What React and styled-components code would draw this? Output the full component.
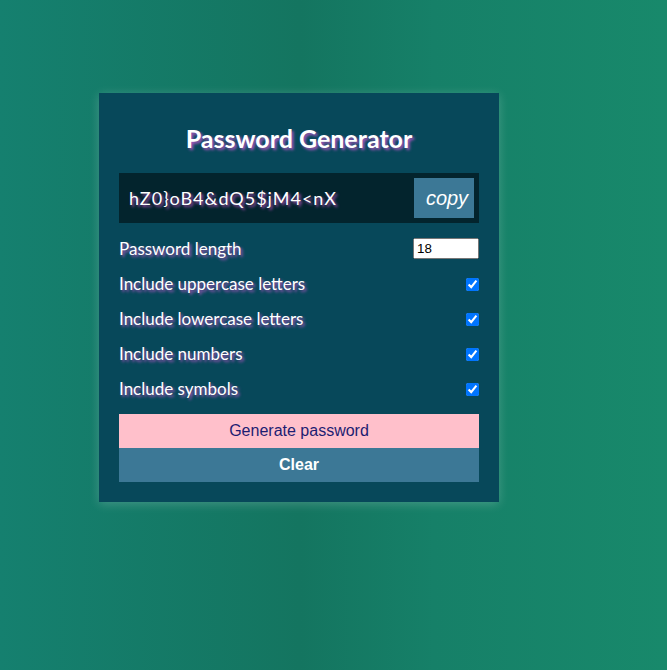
import React, { useState } from "react";
import styled, { createGlobalStyle } from "styled-components";

const GlobalStyle = createGlobalStyle`
  * {
    box-sizing: border-box;
  }
  body {
    margin: 0;
    min-height: 100vh;
    background: linear-gradient(to right, #15806f 0%, #147560 45%, #168068 65%, #18896b 100%);
    color: #fff;
    font-family: Lato, "Open Sans", sans-serif;
  }
`;

const Page = styled.div`
  min-height: 670px;
  padding: 93px 0 0 99px;
`;

const Card = styled.div`
  width: 400px;
  padding: 20px;
  background-color: #07485a;
  box-shadow: 0 2px 10px rgba(255, 255, 255, 0.2);
`;

const Title = styled.h2`
  margin: 10px 0 20px;
  text-align: center;
  font-size: 25px;
  font-weight: 700;
  line-height: 30px;
  text-shadow: 2px 2px 3px rgba(220, 90, 220, 0.75);
`;

const Result = styled.div`
  position: relative;
  display: flex;
  align-items: center;
  height: 50px;
  padding: 12px 10px;
  background-color: rgba(0, 0, 0, 0.5);
  font-size: 18px;
  letter-spacing: 1px;
  text-shadow: 2px 2px 3px rgba(220, 90, 220, 0.75);
`;

const Btn = styled.button`
  display: ${(p) => (p.$block ? "block" : "inline-block")};
  width: ${(p) => (p.$block ? "100%" : "auto")};
  border: none;
  background-color: ${(p) => p.$bg || "#3c7896"};
  color: ${(p) => p.$color || "#fff"};
  font-family: "Liberation Sans", Arial, sans-serif;
  font-size: 16px;
  font-weight: ${(p) => (p.$bold ? 700 : 400)};
  padding: 8px 12px;
  cursor: pointer;
`;

const CopyBtn = styled(Btn)`
  position: absolute;
  top: 5px;
  right: 5px;
  width: 60px;
  height: 40px;
  padding: 0 0 0 6px;
  font-size: 20px;
  font-style: italic;
`;

const Setting = styled.div`
  display: flex;
  justify-content: space-between;
  align-items: center;
  margin: 15px 0;
  font-size: 17px;
  line-height: 20px;
  text-shadow: 2px 2px 3px rgba(220, 90, 220, 0.75);
`;

const NumberInput = styled.input`
  width: 66px;
  height: 21px;
  margin: 0;
  font-family: "Liberation Sans", Arial, sans-serif;
  font-size: 13.33px;
`;

const Check = styled.input`
  margin: 3px 0 3px 4px;
  width: 13px;
  height: 13px;
`;

const options = [
  { key: "upper", label: "Include uppercase letters" },
  { key: "lower", label: "Include lowercase letters" },
  { key: "numbers", label: "Include numbers" },
  { key: "symbols", label: "Include symbols" },
];

export default function App() {
  const [length, setLength] = useState(18);
  const [checked, setChecked] = useState({
    upper: true,
    lower: true,
    numbers: true,
    symbols: true,
  });
  const [password, setPassword] = useState("hZ0}oB4&dQ5$jM4<nX");

  return (
    <>
      <GlobalStyle />
      <Page>
        <Card>
          <Title>Password Generator</Title>
          <Result>
            <span>{password}</span>
            <CopyBtn>copy</CopyBtn>
          </Result>
          <Setting>
            <label>Password length</label>
            <NumberInput
              type="number"
              value={length}
              onChange={(e) => setLength(e.target.value)}
            />
          </Setting>
          {options.map((o) => (
            <Setting key={o.key}>
              <label>{o.label}</label>
              <Check
                type="checkbox"
                checked={checked[o.key]}
                onChange={() =>
                  setChecked({ ...checked, [o.key]: !checked[o.key] })
                }
              />
            </Setting>
          ))}
          <Btn $block $bg="pink" $color="#1d1d72">
            Generate password
          </Btn>
          <Btn $block $bold onClick={() => setPassword("")}>
            Clear
          </Btn>
        </Card>
      </Page>
    </>
  );
}
